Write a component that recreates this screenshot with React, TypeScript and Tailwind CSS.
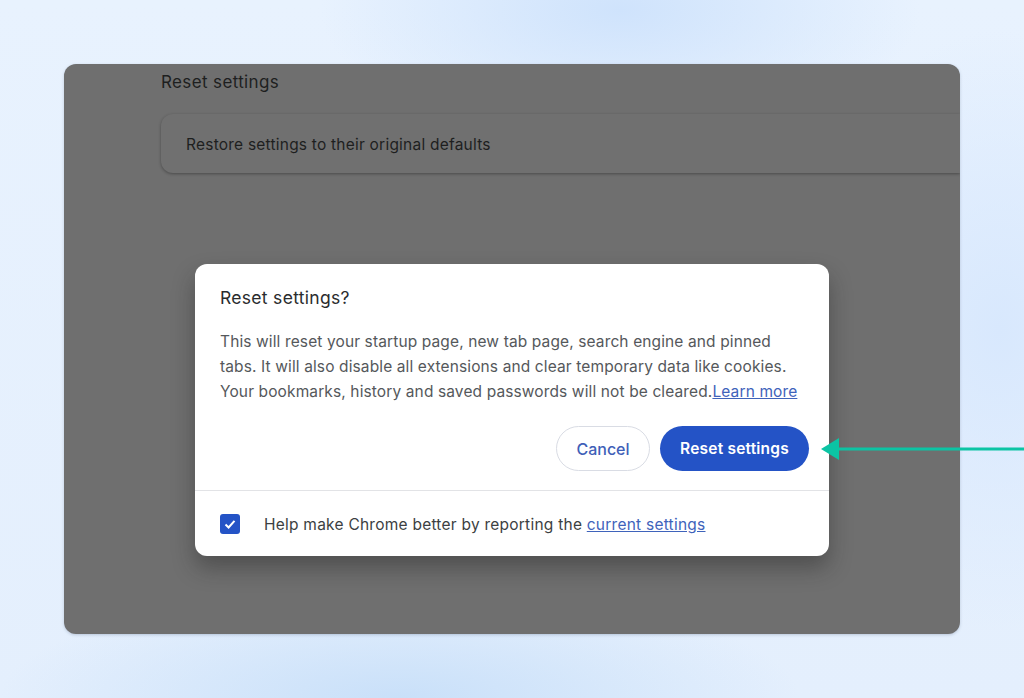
export default function App() {
  return (
    <div className="relative h-[698px] w-[1024px] overflow-hidden bg-[radial-gradient(ellipse_300px_130px_at_620px_10px,#cfe3fc,transparent),radial-gradient(ellipse_400px_110px_at_400px_698px,#c9e0f9,transparent),radial-gradient(ellipse_200px_300px_at_1000px_330px,#d8e8fd,transparent),linear-gradient(#e8f2fe,#e4effd)] pt-16 pl-16 font-['Inter',sans-serif]">
      <div className="h-[570px] w-[896px] overflow-hidden rounded-xl bg-[#6f6f6f] pl-[97px] shadow-[0_1px_3px_rgba(60,80,110,0.25)]">
        <h2 className="mt-[6px] text-[17px] leading-[24px] tracking-[0.37px] text-[#1e1f1f]">Reset settings</h2>
        <div className="mt-[20px] flex h-[59px] items-center rounded-l-xl bg-[#707070] pt-[2px] pl-[25px] text-[15.5px] tracking-[0.22px] text-[#1e1f1f] shadow-[0_1px_3px_rgba(30,30,30,0.45)]">
          Restore settings to their original defaults
        </div>
      </div>

      <div className="absolute top-[264px] left-[195px] h-[292px] w-[634px] rounded-xl bg-white shadow-[0_12px_22px_rgba(30,30,30,0.38)]">
        <h1 className="pt-[22px] pl-[25px] text-[17.5px] leading-[24px] tracking-[0.3px] text-[#2a2c2e]">Reset settings?</h1>
        <p className="mt-[19px] w-[620px] pl-[25px] text-[15.5px] leading-[25px] tracking-[0.12px] text-[#55585b]">
          This will reset your startup page, new tab page, search engine and pinned
          <br />
          tabs. It will also disable all extensions and clear temporary data like cookies.
          <br />
          Your bookmarks, history and saved passwords will not be cleared.
          <a className="text-[#3f63bb] underline">Learn more</a>
        </p>
        <div className="mt-[22px] flex justify-end gap-[10px] pr-5">
          <button className="h-[45px] w-[94px] rounded-full border border-[#d9dce4] bg-white text-[16px] font-medium text-[#3f5fb8]">
            Cancel
          </button>
          <button className="h-[45px] w-[149px] rounded-full bg-[#2453c6] text-[15.5px] font-semibold tracking-[0.2px] text-white">
            Reset settings
          </button>
        </div>
        <div className="mt-[19px] flex h-[65px] items-center border-t border-[#e2e3e6] pt-[2px] pl-[25px]">
          <span className="flex h-5 w-5 items-center justify-center rounded-[3px] bg-[#2453c6]">
            <svg viewBox="0 0 20 20" className="h-5 w-5" fill="none" stroke="white" strokeWidth="2">
              <path d="M5.5 10.5 L8.6 13.5 L14.5 6.8" />
            </svg>
          </span>
          <span className="mt-[2px] ml-[24px] text-[15.5px] tracking-[0.24px] text-[#3c3f42]">
            Help make Chrome better by reporting the <a className="text-[#3f63bb] underline">current settings</a>
          </span>
        </div>
      </div>

      <svg className="absolute top-[437px] left-[820px]" width="204" height="24" viewBox="0 0 204 24">
        <path d="M1 12 L19 1 V23 Z" fill="#0cc4a4" />
        <rect x="17" y="10.5" width="187" height="3" fill="#0cc4a4" />
      </svg>
    </div>
  );
}
